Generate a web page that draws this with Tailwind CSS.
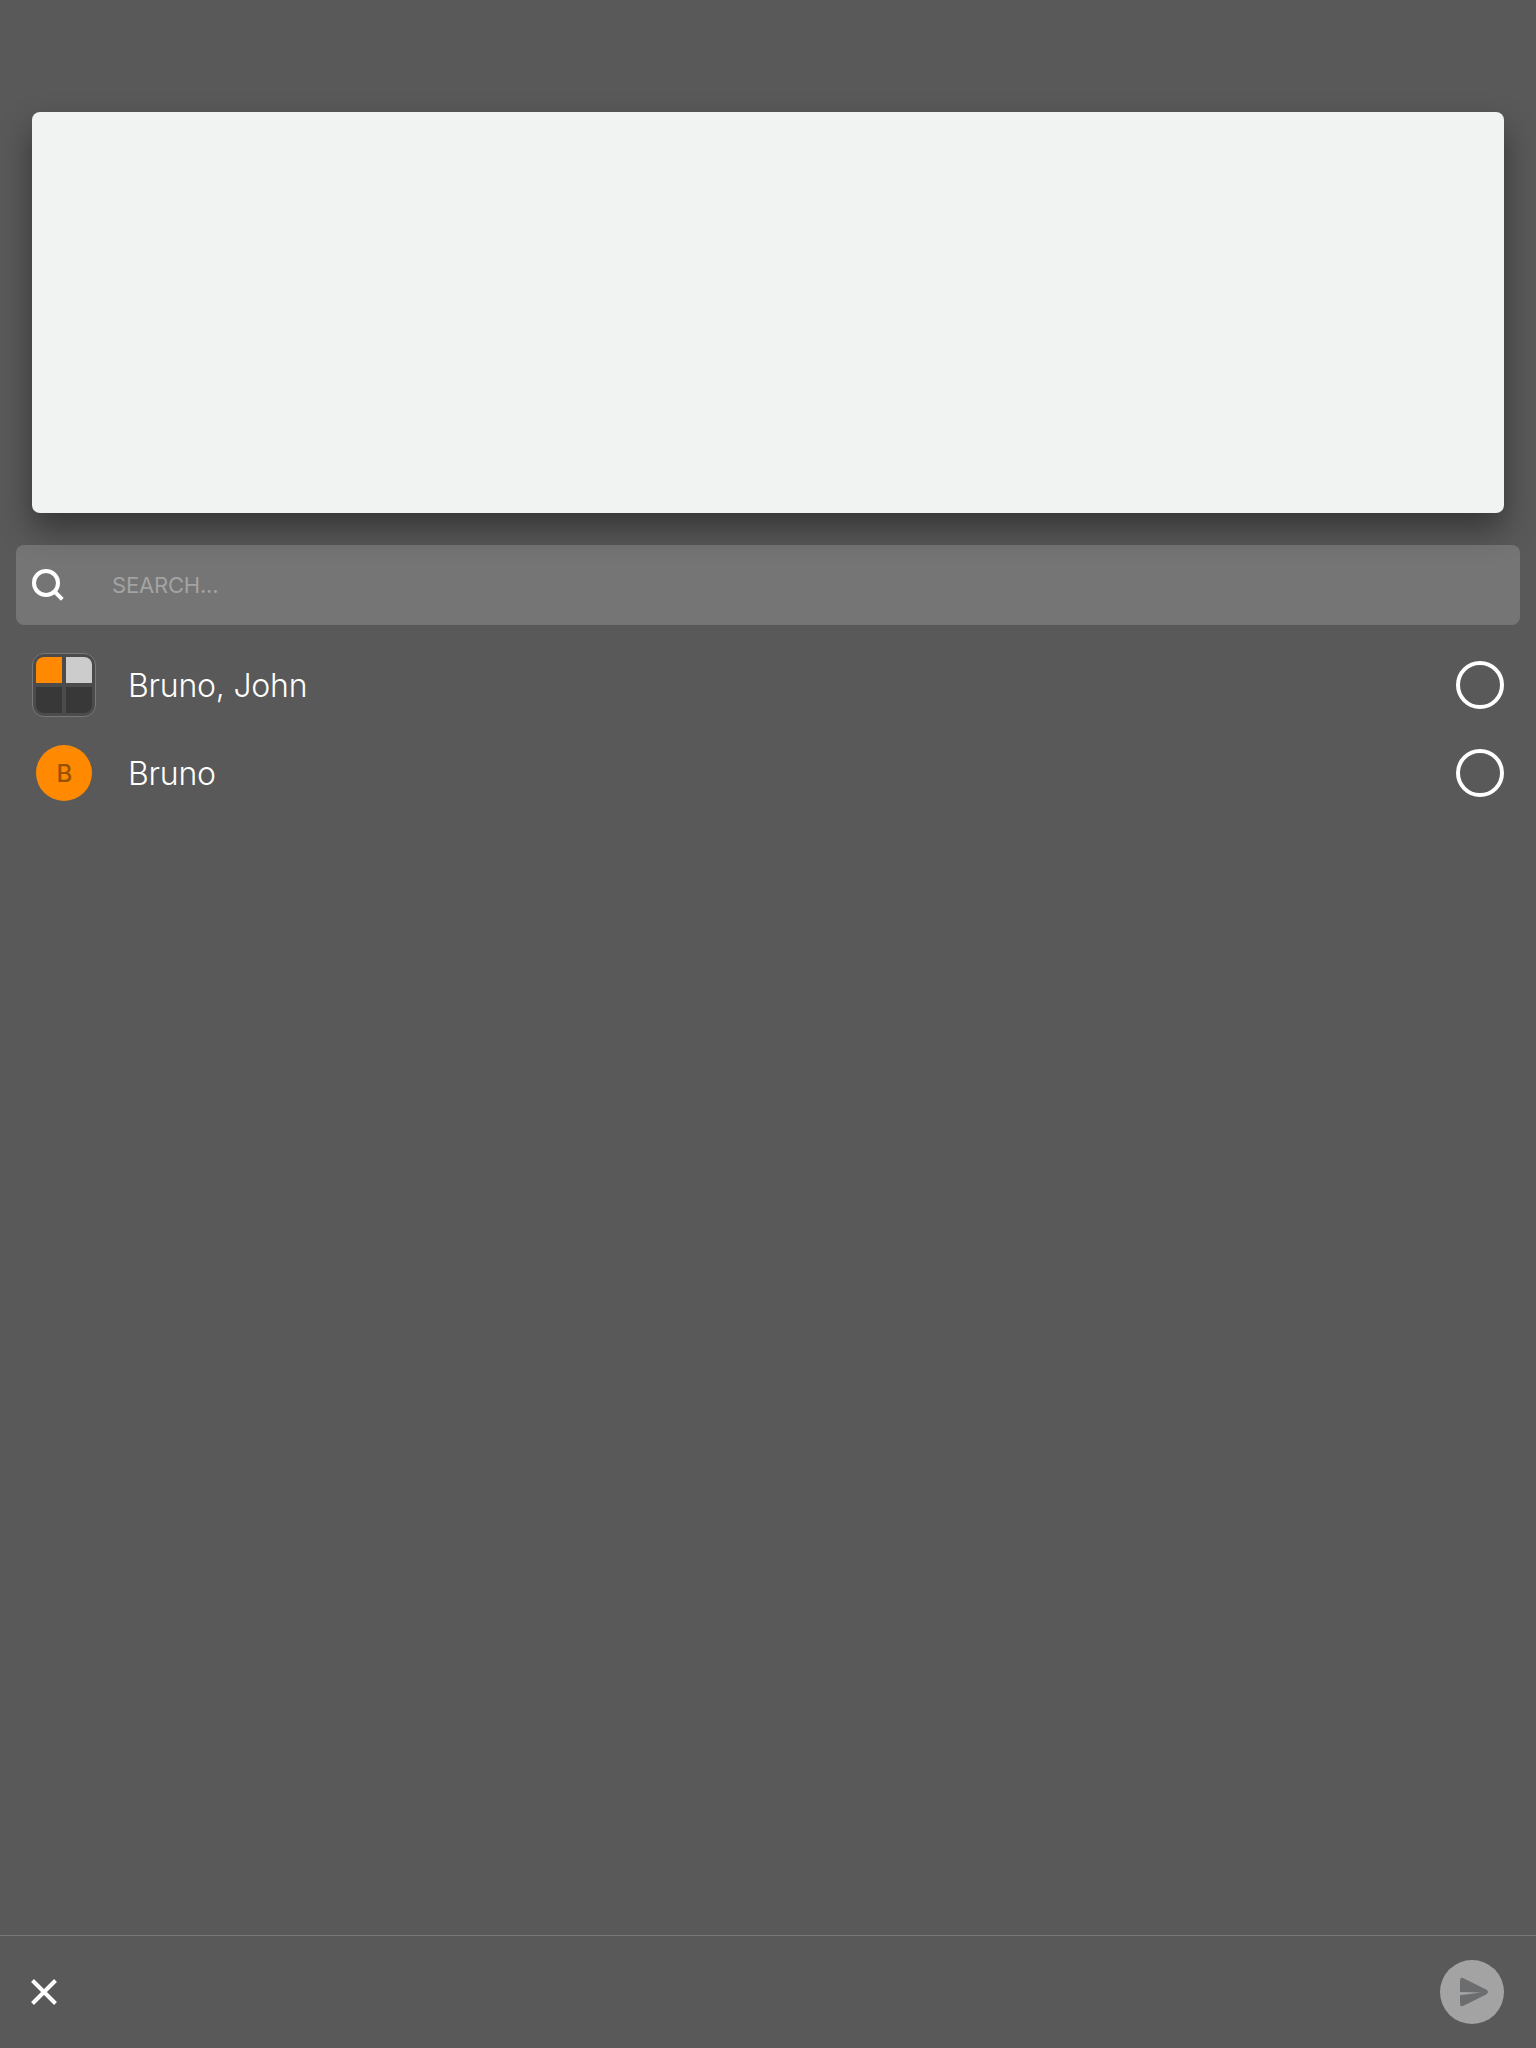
<!DOCTYPE html>
<html lang="en">
<head>
<meta charset="utf-8">
<title>Share</title>
<script src="https://cdn.jsdelivr.net/npm/@tailwindcss/browser@4"></script>
</head>
<body class="bg-[#595959] font-['Inter',sans-serif] text-white">
<div class="flex h-[2048px] w-[1536px] flex-col overflow-hidden pt-28">
  <div class="mx-8 h-[401px] shrink-0 rounded-lg bg-[#f0f3f2] shadow-[0_16px_32px_rgba(0,0,0,0.4)]"></div>
  <div class="mx-4 mt-8 flex h-20 shrink-0 items-center rounded-lg bg-white/17 px-4">
    <svg class="size-8" viewBox="0 0 32 32" fill="none" stroke="#fff" stroke-width="4"><circle cx="14" cy="14" r="12"/><path d="M22.5 22.5l7.8 7.8"/></svg>
    <span class="ml-12 pt-px text-[22px] tracking-[-0.2px] text-[#a3a3a3]">SEARCH...</span>
  </div>
  <div class="mt-4 flex flex-col">
    <div class="flex h-22 items-center px-8">
      <div class="size-16 rounded-xl border border-[#777777] bg-[#4b4b4b] p-[3px]">
        <div class="grid size-full grid-cols-2 gap-1 overflow-hidden rounded-lg">
          <div class="bg-[#ff8900]"></div><div class="bg-[#cccccc]"></div>
          <div class="bg-[#383838]"></div><div class="bg-[#383838]"></div>
        </div>
      </div>
      <span class="ml-8 flex-1 pt-0.5 text-[32px] font-light tracking-[-0.22px]">Bruno, John</span>
      <div class="size-12 rounded-full border-4 border-white"></div>
    </div>
    <div class="flex h-22 items-center px-8">
      <div class="flex size-16 items-center justify-center">
        <div class="flex size-14 items-center justify-center rounded-full bg-[#ff8900] pt-0.5 pl-px text-2xl font-medium text-[#995200]">B</div>
      </div>
      <span class="ml-8 flex-1 pt-0.5 text-[32px] font-light tracking-[-0.22px]">Bruno</span>
      <div class="size-12 rounded-full border-4 border-white"></div>
    </div>
  </div>
  <div class="mt-auto flex h-[113px] shrink-0 items-center justify-between border-t border-[#777777] pr-8 pl-[31px]">
    <svg class="size-[26px]" viewBox="0 0 26 26" fill="none" stroke="#fff" stroke-width="4"><path d="M1.5 1.5l23 23M24.5 1.5l-23 23"/></svg>
    <div class="size-16 rounded-full bg-[#a3a3a3]">
      <svg class="size-16" viewBox="0 0 64 64" fill="#6b6d6e"><path d="M20 32V20.500Q20 16.800 23.500 18.200L46.500 29.800Q49.500 32 46.500 34.200L23.500 45.800Q20 47.200 20 43.500V35.300L41 32.400Z"/></svg>
    </div>
  </div>
</div>
</body>
</html>
